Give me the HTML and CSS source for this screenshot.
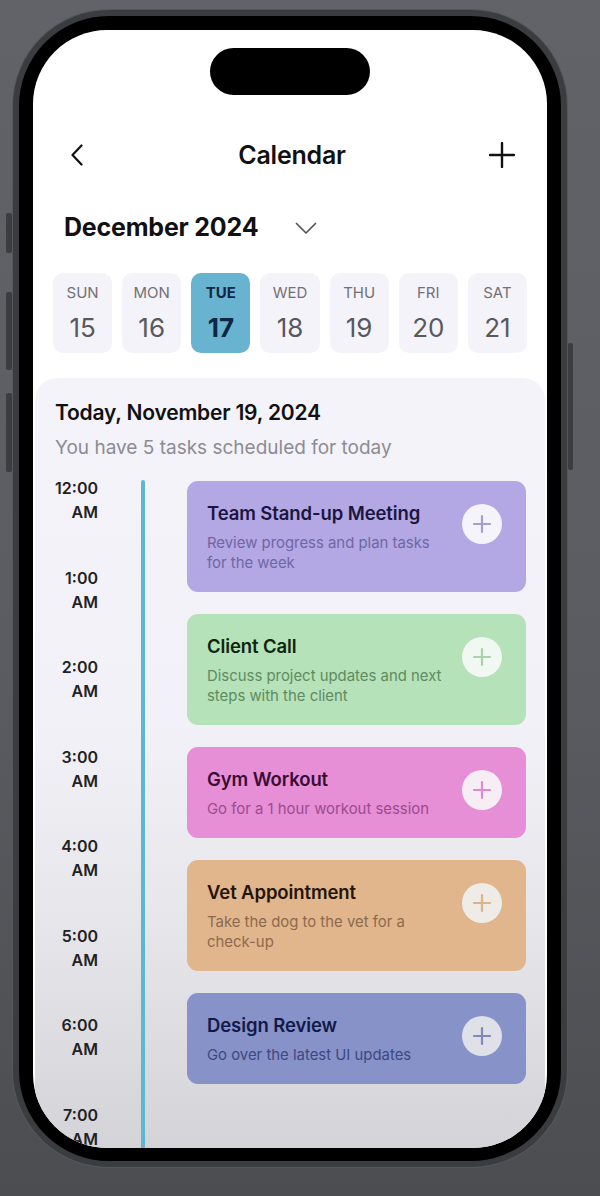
FILE: index.html
```html
<!DOCTYPE html>
<html lang="en">
<head>
<meta charset="utf-8">
<title>Calendar</title>
<link rel="stylesheet" href="styles.css">
</head>
<body>
<div class="phone">
  <span class="side-btn side-l1"></span>
  <span class="side-btn side-l2"></span>
  <span class="side-btn side-l3"></span>
  <span class="side-btn side-r1"></span>
  <div class="screen">
    <div class="island"></div>
    <header class="nav">
      <svg class="nav-back" width="12" height="22" viewBox="0 0 12 22"><path d="M10.5 1.5 L1.5 11 L10.5 20.5" fill="none" stroke="#111" stroke-width="2.2" stroke-linecap="round" stroke-linejoin="round"/></svg>
      <h1 class="nav-title">Calendar</h1>
      <svg class="nav-add" width="26" height="26" viewBox="0 0 26 26"><path d="M13 1 V25 M1 13 H25" fill="none" stroke="#111" stroke-width="2.4" stroke-linecap="round"/></svg>
    </header>
    <div class="month">
      <span class="month-label">December 2024</span>
      <svg class="month-chev" width="22" height="13" viewBox="0 0 22 13"><path d="M1.5 1.5 L11 11 L20.5 1.5" fill="none" stroke="#555" stroke-width="1.7" stroke-linecap="round" stroke-linejoin="round"/></svg>
    </div>
    <div class="week">
      <div class="day"><span class="day-name">SUN</span><span class="day-num">15</span></div>
      <div class="day"><span class="day-name">MON</span><span class="day-num">16</span></div>
      <div class="day day-active"><span class="day-name">TUE</span><span class="day-num">17</span></div>
      <div class="day"><span class="day-name">WED</span><span class="day-num">18</span></div>
      <div class="day"><span class="day-name">THU</span><span class="day-num">19</span></div>
      <div class="day"><span class="day-name">FRI</span><span class="day-num">20</span></div>
      <div class="day"><span class="day-name">SAT</span><span class="day-num">21</span></div>
    </div>
    <section class="panel">
      <h2 class="panel-title">Today, November 19, 2024</h2>
      <p class="panel-sub">You have 5 tasks scheduled for today</p>
      <div class="timeline">
        <div class="times">
          <div class="slot">12:00<br>AM</div>
          <div class="slot">1:00<br>AM</div>
          <div class="slot">2:00<br>AM</div>
          <div class="slot">3:00<br>AM</div>
          <div class="slot">4:00<br>AM</div>
          <div class="slot">5:00<br>AM</div>
          <div class="slot">6:00<br>AM</div>
          <div class="slot">7:00<br>AM</div>
        </div>
        <div class="rail"></div>
        <div class="cards">
          <article class="card card-purple">
            <div class="card-text">
              <h3 class="card-title">Team Stand-up Meeting</h3>
              <p class="card-desc">Review progress and plan tasks for the week</p>
            </div>
            <span class="card-add"><svg width="20" height="20" viewBox="0 0 20 20"><path d="M10 2 V18 M2 10 H18" fill="none" stroke-width="2.2" stroke-linecap="round"/></svg></span>
          </article>
          <article class="card card-green">
            <div class="card-text">
              <h3 class="card-title">Client Call</h3>
              <p class="card-desc">Discuss project updates and next steps with the client</p>
            </div>
            <span class="card-add"><svg width="20" height="20" viewBox="0 0 20 20"><path d="M10 2 V18 M2 10 H18" fill="none" stroke-width="2.2" stroke-linecap="round"/></svg></span>
          </article>
          <article class="card card-pink">
            <div class="card-text">
              <h3 class="card-title">Gym Workout</h3>
              <p class="card-desc">Go for a 1 hour workout session</p>
            </div>
            <span class="card-add"><svg width="20" height="20" viewBox="0 0 20 20"><path d="M10 2 V18 M2 10 H18" fill="none" stroke-width="2.2" stroke-linecap="round"/></svg></span>
          </article>
          <article class="card card-orange">
            <div class="card-text">
              <h3 class="card-title">Vet Appointment</h3>
              <p class="card-desc">Take the dog to the vet for a <span class="nowrap">check-up</span></p>
            </div>
            <span class="card-add"><svg width="20" height="20" viewBox="0 0 20 20"><path d="M10 2 V18 M2 10 H18" fill="none" stroke-width="2.2" stroke-linecap="round"/></svg></span>
          </article>
          <article class="card card-blue">
            <div class="card-text">
              <h3 class="card-title">Design Review</h3>
              <p class="card-desc">Go over the latest UI updates</p>
            </div>
            <span class="card-add"><svg width="20" height="20" viewBox="0 0 20 20"><path d="M10 2 V18 M2 10 H18" fill="none" stroke-width="2.2" stroke-linecap="round"/></svg></span>
          </article>
        </div>
      </div>
    </section>
  </div>
</div>
</body>
</html>
```

FILE: styles.css
```css
* { box-sizing: border-box; }

html, body {
  margin: 0;
  padding: 0;
}

body {
  width: 600px;
  height: 1196px;
  overflow: hidden;
  background: linear-gradient(180deg, #616369 0%, #5a5c61 55%, #4b4d51 100%);
  font-family: Inter, "Noto Sans", "Liberation Sans", sans-serif;
  padding: 10px 0 0 13px;
}

.phone {
  position: relative;
  width: 554px;
  height: 1157px;
  border: 6px solid #3b3c40;
  border-radius: 96px;
  background: #000;
  padding: 14px 14px 13px 14px;
  box-shadow: 0 0 0 1px #55575c;
}

.side-btn {
  position: absolute;
  width: 6px;
  background: #3c3d41;
  border-radius: 2px;
}
.side-l1 { left: -13px; top: 197px; height: 40px; }
.side-l2 { left: -13px; top: 276px; height: 78px; }
.side-l3 { left: -13px; top: 377px; height: 79px; }
.side-r1 { right: -12px; top: 327px; height: 127px; width: 5px; }

.screen {
  width: 514px;
  height: 1118px;
  border-radius: 74px;
  background: #fff;
  overflow: hidden;
  display: flex;
  flex-direction: column;
}

.island {
  align-self: center;
  margin-top: 18px;
  width: 160px;
  height: 47px;
  border-radius: 24px;
  background: #000;
  flex-shrink: 0;
}

.nav {
  margin-top: 40px;
  height: 40px;
  flex-shrink: 0;
  display: grid;
  grid-template-columns: 1fr auto 1fr;
  align-items: center;
  padding: 0 32px 0 38px;
}
.nav-title {
  margin: 0;
  font-size: 25px;
  font-weight: 600;
  color: #111;
  letter-spacing: -0.2px;
  transform: translateX(-1px);
}
.nav-back { display: block; justify-self: start; }
.nav-add { display: block; justify-self: end; }

.month {
  margin-top: 37px;
  height: 30px;
  flex-shrink: 0;
  display: flex;
  align-items: center;
  padding-left: 31px;
  gap: 37px;
}
.month-label {
  font-size: 25px;
  font-weight: 700;
  color: #111;
  letter-spacing: -0.2px;
}
.month-chev { display: block; margin-top: 2px; }

.week {
  margin-top: 31px;
  flex-shrink: 0;
  display: grid;
  grid-template-columns: repeat(7, 1fr);
  gap: 10px;
  padding: 0 20px;
}
.day {
  height: 80px;
  border-radius: 10px;
  background: #f4f3f9;
  display: flex;
  flex-direction: column;
  align-items: center;
  justify-content: center;
  gap: 11px;
}
.day-name {
  font-size: 15px;
  color: #717176;
  line-height: 18px;
}
.day-num {
  font-size: 26px;
  color: #58585d;
  line-height: 30px;
}
.day-active {
  background: #68b3cf;
}
.day-active .day-name { color: #0f2742; font-weight: 700; }
.day-active .day-num { color: #0f2742; font-weight: 700; }

.panel {
  margin: 25px 2px 0;
  flex: 1;
  border-radius: 22px 22px 0 0;
  background: linear-gradient(180deg, #f4f3fa 0%, #f2f1f7 45%, #e6e6eb 70%, #d3d3d8 100%);
  padding: 22px 19px 0 20px;
  overflow: hidden;
}
.panel-title {
  margin: 0;
  font-size: 21px;
  line-height: 26px;
  font-weight: 600;
  color: #111;
  letter-spacing: -0.2px;
}
.panel-sub {
  margin: 10px 0 0;
  font-size: 19px;
  line-height: 24px;
  color: #8c8c92;
}

.timeline {
  margin-top: 16px;
  display: flex;
}
.times {
  width: 43px;
  flex-shrink: 0;
  display: flex;
  flex-direction: column;
}
.slot {
  height: 89.5px;
  text-align: right;
  font-size: 16px;
  font-weight: 600;
  line-height: 24px;
  color: #222;
  white-space: nowrap;
}
.rail {
  width: 4px;
  margin-left: 43px;
  margin-top: 4px;
  background: #5db6d2;
  align-self: stretch;
  border-radius: 2px 2px 0 0;
  flex-shrink: 0;
}
.cards {
  margin-left: 42px;
  margin-top: 5px;
  width: 340px;
  display: flex;
  flex-direction: column;
  gap: 22px;
}
.card {
  border-radius: 11px;
  padding: 20px 24px 19px 20px;
  display: flex;
  align-items: flex-start;
  gap: 11px;
}
.card-text { flex: 1; min-width: 0; }
.card-title {
  margin: 0;
  font-size: 18.5px;
  line-height: 24px;
  font-weight: 600;
  letter-spacing: -0.1px;
}
.card-desc {
  margin: 8px 0 0;
  font-size: 14.9px;
  line-height: 20px;
}
.nowrap { white-space: nowrap; }
.card-add {
  width: 40px;
  height: 40px;
  margin-top: 3px;
  border-radius: 50%;
  flex-shrink: 0;
  display: flex;
  align-items: center;
  justify-content: center;
  background: #f5f3fb;
}
.card-add svg { display: block; }

.card-purple { background: #b3a8e3; }
.card-purple .card-title { color: #1b1640; }
.card-purple .card-desc { color: #6f66a3; }
.card-purple .card-add svg { stroke: #a79dd2; }

.card-green { background: #b5e2b8; }
.card-green .card-title { color: #10240f; }
.card-green .card-desc { color: #5f8b62; }
.card-green .card-add { background: #f1f7f1; }
.card-green .card-add svg { stroke: #a9d3ab; }

.card-pink { background: #e78fd6; }
.card-pink .card-title { color: #3a0c34; }
.card-pink .card-desc { color: #9b4b8e; }
.card-pink .card-add { background: #f6eef4; }
.card-pink .card-add svg { stroke: #e28ad1; }

.card-orange { background: #e2b68d; }
.card-orange .card-title { color: #241405; }
.card-orange .card-desc { color: #8c6a4d; }
.card-orange .card-add { background: #efebe6; }
.card-orange .card-add svg { stroke: #dcb48c; }

.card-blue { background: #8792c9; }
.card-blue .card-title { color: #111a48; }
.card-blue .card-desc { color: #3f4880; }
.card-blue .card-add { background: #dfe0e8; }
.card-blue .card-add svg { stroke: #8089b8; }
```
